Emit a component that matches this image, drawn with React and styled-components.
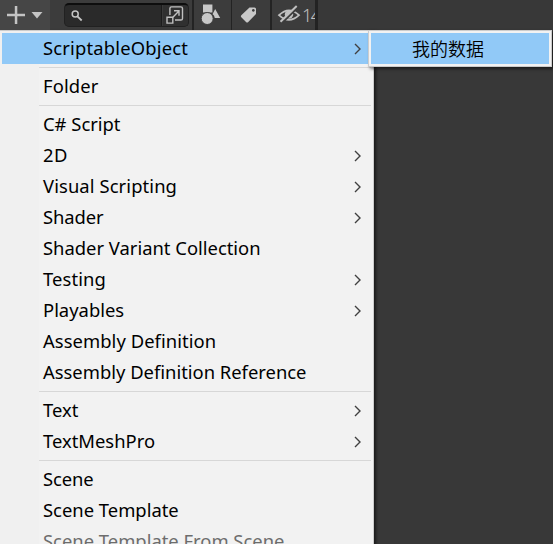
import React from "react";
import styled, { createGlobalStyle } from "styled-components";

const GlobalStyle = createGlobalStyle`
  * { box-sizing: border-box; }
  body { margin: 0; background: #383838; overflow: hidden; }
  svg { flex: none; display: block; }
`;

const Window = styled.div`
  position: relative;
  width: 553px;
  height: 544px;
  overflow: hidden;
  background: #383838;
  font-family: "Noto Sans", "Noto Sans CJK SC", sans-serif;
`;

const Toolbar = styled.div`
  display: flex;
  height: 30px;
  width: 318px;
  background: #3c3c3c;
  border-right: 3px solid #232323;
`;

const AddButton = styled.div`
  display: flex;
  width: 50px;
  height: 30px;
  background: #464646;
`;

const SearchBox = styled.div`
  display: flex;
  flex: none;
  margin: 3px 0 0 14px;
  width: 125px;
  height: 24px;
  background: #2a2a2a;
  border: 1px solid #212121;
  border-top: 2px solid #0d0d0d;
  border-radius: 5px;
  overflow: hidden;
`;

const SearchField = styled.div`
  width: 97px;
  border-right: 1px solid #1c1c1c;
`;

const SearchExpand = styled.div`
  flex: 1;
  border-left: 1px solid #3a3a3a;
  background: #303030;
`;

const ToolButton = styled.div`
  flex: none;
  width: ${(p) => p.$width}px;
  height: 30px;
  margin-left: ${(p) => p.$gap || 0}px;
  border-left: ${(p) => p.$line || 1}px solid #232323;
  display: flex;
  overflow: hidden;
`;

const HiddenCount = styled.span`
  font-size: 18px;
  line-height: 31px;
  color: #c0c0c0;
  letter-spacing: -1.5px;
  font-weight: 350;
`;

const Menu = styled.div`
  width: 374px;
  height: 514px;
  padding: 2px 2px 0 2px;
  border-top: 1px solid #ccc;
  border-right: 1px solid #ccc;
  background: linear-gradient(90deg, #f0f0f0 39px, #f2f2f2 39px);
  box-shadow: 2px 2px 3px rgba(0, 0, 0, 0.55);
`;

const MenuItem = styled.div`
  display: flex;
  align-items: center;
  justify-content: space-between;
  height: 31px;
  padding: 0 8px 0 41px;
  background: ${(p) => (p.$active ? "#91c9f7" : "transparent")};
  color: ${(p) => (p.$disabled ? "#6d6d6d" : "#000")};
`;

const Label = styled.span`
  font-size: 18.4px;
  line-height: 29px;
  margin-bottom: 2px;
  white-space: nowrap;
  letter-spacing: ${(p) => p.$track || 0}px;
`;

const ChineseLabel = styled(Label)`
  font-size: 18px;
  font-weight: 350;
  margin: 2px 0 0;
`;

const Separator = styled.div`
  height: 1px;
  margin: 3px 0 3px 37px;
  background: #d7d7d7;
`;

const Submenu = styled.div`
  position: absolute;
  left: 368px;
  top: 30px;
  width: 184px;
  height: 37px;
  padding: 2px;
  border: 1px solid #ccc;
  background: #f2f2f2;
  box-shadow: 2px 2px 3px rgba(0, 0, 0, 0.5);
`;

const Chevron = () => (
  <svg width="10" height="12" viewBox="0 0 10 12" fill="none" stroke="#404040" strokeWidth="1.4">
    <path d="M2 1 L7 6 L2 11" />
  </svg>
);

const PlusIcon = () => (
  <svg width="50" height="30" viewBox="0 0 50 30" fill="#c4c4c4">
    <path d="M14.8 6h2.5v7.8h7.7v2.4h-7.7V24h-2.5v-7.8H7v-2.4h7.8z" />
    <path d="M31.5 12h11L37 18.5z" />
  </svg>
);

const SearchIcon = () => (
  <svg width="30" height="21" viewBox="0 0 30 21" fill="none" stroke="#c4c4c4" strokeWidth="1.5">
    <circle cx="10.2" cy="9" r="3" />
    <path d="M12.4 11.3L16.7 15.5" strokeWidth="1.8" />
  </svg>
);

const ExpandIcon = () => (
  <svg width="23" height="21" viewBox="0 0 23 21" fill="none" stroke="#c0c0c0" strokeWidth="1.4">
    <path d="M6.9 10V3.5Q6.9 1.9 8.5 1.9H17.9Q19.5 1.9 19.5 3.5V13.4Q19.5 15 17.9 15H12" />
    <path d="M4 12.3h5.8v5.8H4z" />
    <path d="M9.9 12.2L15.7 6.2M11 5.7h5v5" />
  </svg>
);

const ShapesIcon = () => (
  <svg width="37" height="30" viewBox="0 0 37 30" fill="#c8c8c8">
    <path d="M9 4.5h9.4v8H9zM21.2 9L26.2 18H20.8Q20.4 15.5 18.6 14z" />
    <circle cx="13.2" cy="18.5" r="6" stroke="#3c3c3c" strokeWidth="1" />
  </svg>
);

const TagIcon = () => (
  <svg width="38" height="30" viewBox="0 0 38 30" fill="#c8c8c8">
    <path fillRule="evenodd" d="M17.5 7.5H22.5Q24 7.5 24 9V14L16 22.3Q15 23 14 22L9.3 17.3Q8.3 16.2 9.3 15.2zM21.3 9a1.4 1.4 0 1 0 .1 0z" />
  </svg>
);

const EyeOffIcon = () => (
  <svg width="30" height="30" viewBox="0 0 30 30" fill="none" stroke="#c0c0c0" strokeWidth="1.8">
    <path d="M7 15.2Q17 5.5 27 15.2Q17 24.5 7 15.2z" />
    <circle cx="17" cy="14.5" r="4.2" fill="#c0c0c0" stroke="none" />
    <path d="M9.8 23L26 7.2" stroke="#3c3c3c" strokeWidth="2" />
    <path d="M8.5 21.8L24.7 6" strokeWidth="2" />
  </svg>
);

const ITEMS = [
  { label: "ScriptableObject", sub: true, active: true, track: 0.18 },
  null,
  { label: "Folder", track: 0.12 },
  null,
  { label: "C# Script" },
  { label: "2D", sub: true, track: 0.6 },
  { label: "Visual Scripting", sub: true, track: 0.1 },
  { label: "Shader", sub: true, track: -0.1 },
  { label: "Shader Variant Collection" },
  { label: "Testing", sub: true, track: 0.1 },
  { label: "Playables", sub: true },
  { label: "Assembly Definition", track: 0.06 },
  { label: "Assembly Definition Reference" },
  null,
  { label: "Text", sub: true },
  { label: "TextMeshPro", sub: true },
  null,
  { label: "Scene", track: -0.1 },
  { label: "Scene Template" },
  { label: "Scene Template From Scene", disabled: true },
];

export default function App() {
  return (
    <Window>
      <GlobalStyle />
      <Toolbar>
        <AddButton><PlusIcon /></AddButton>
        <SearchBox>
          <SearchField><SearchIcon /></SearchField>
          <SearchExpand><ExpandIcon /></SearchExpand>
        </SearchBox>
        <ToolButton $width={39} $gap={3} $line={2}><ShapesIcon /></ToolButton>
        <ToolButton $width={39}><TagIcon /></ToolButton>
        <ToolButton $width={45} $line={2}>
          <EyeOffIcon />
          <HiddenCount>14</HiddenCount>
        </ToolButton>
      </Toolbar>
      <Menu>
        {ITEMS.map((item, i) =>
          item ? (
            <MenuItem key={i} $active={item.active} $disabled={item.disabled}>
              <Label $track={item.track}>{item.label}</Label>
              {item.sub && <Chevron />}
            </MenuItem>
          ) : (
            <Separator key={i} />
          )
        )}
      </Menu>
      <Submenu>
        <MenuItem $active><ChineseLabel>我的数据</ChineseLabel></MenuItem>
      </Submenu>
    </Window>
  );
}
